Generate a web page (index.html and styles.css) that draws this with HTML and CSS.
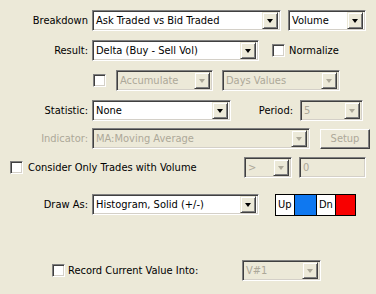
FILE: index.html
```html
<!DOCTYPE html>
<html>
<head>
<meta charset="utf-8">
<link rel="stylesheet" href="styles.css">
</head>
<body>
<div class="dlg">
  <div class="row r1">
    <span class="lbl">Breakdown</span>
    <div class="combo c-break"><span class="val">Ask Traded vs Bid Traded</span><span class="btn"><i class="arr"></i></span></div>
    <div class="combo c-vol"><span class="val">Volume</span><span class="btn"><i class="arr"></i></span></div>
  </div>
  <div class="row r2">
    <span class="lbl">Result:</span>
    <div class="combo c-result"><span class="val">Delta (Buy - Sell Vol)</span><span class="btn"><i class="arr"></i></span></div>
    <span class="chk chk-norm"></span><span class="ctext">Normalize</span>
  </div>
  <div class="row r3">
    <span class="chk chk-acc"></span>
    <div class="combo dis c-acc"><span class="val">Accumulate</span><span class="btn"><i class="arr"></i></span></div>
    <div class="combo dis c-days"><span class="val">Days Values</span><span class="btn"><i class="arr"></i></span></div>
  </div>
  <div class="row r4">
    <span class="lbl">Statistic:</span>
    <div class="combo c-stat"><span class="val">None</span><span class="btn"><i class="arr"></i></span></div>
    <span class="lbl-period">Period:</span>
    <div class="combo dis c-period"><span class="val">5</span><span class="btn"><i class="arr"></i></span></div>
  </div>
  <div class="row r5">
    <span class="lbl dis-text">Indicator:</span>
    <div class="combo dis c-ind"><span class="val">MA:Moving Average</span><span class="btn"><i class="arr"></i></span></div>
    <span class="button dis-text">Setup</span>
  </div>
  <div class="row r6">
    <span class="chk chk-cons"></span><span class="ctext">Consider Only Trades with Volume</span>
    <div class="combo dis c-op"><span class="val">&gt;</span><span class="btn"><i class="arr"></i></span></div>
    <div class="edit dis c-zero"><span class="val">0</span></div>
  </div>
  <div class="row r7">
    <span class="lbl">Draw As:</span>
    <div class="combo c-draw"><span class="val">Histogram, Solid (+/-)</span><span class="btn"><i class="arr"></i></span></div>
    <div class="colors">
      <span class="cell up">Up</span><span class="cell blue"></span><span class="cell dn">Dn</span><span class="cell red"></span>
    </div>
  </div>
  <div class="row r8">
    <span class="chk chk-rec"></span><span class="ctext">Record Current Value Into:</span>
    <div class="combo dis c-v"><span class="val">V#1</span><span class="btn"><i class="arr"></i></span></div>
  </div>
</div>
</body>
</html>
```

FILE: styles.css
```css
html, body {
  margin: 0;
  padding: 0;
  background: #ECE9D8;
}
body {
  width: 376px;
  height: 294px;
  overflow: hidden;
  font-family: Tahoma, "DejaVu Sans Condensed", "Liberation Sans", sans-serif;
  font-size: 11px;
  color: #000;
}
.dlg {
  display: flex;
  flex-direction: column;
  padding-top: 10px;
}
.row {
  display: flex;
  align-items: center;
  height: 21px;
}
.r2, .r3, .r4 { margin-top: 9px; }
.r5 { margin-top: 7px; }
.r6 { margin-top: 8px; }
.r7 { margin-top: 16px; }
.r8 { margin-top: 45px; }

.lbl {
  width: 88px;
  flex: none;
  text-align: right;
  white-space: nowrap;
}
.dis-text { color: #ACA899; }

.combo, .edit {
  box-sizing: border-box;
  height: 21px;
  flex: none;
  display: flex;
  align-items: center;
  background: #fff;
  border: 1px solid;
  border-color: #808080 #fff #fff #808080;
  box-shadow: inset 1px 1px 0 #404040, inset -1px -1px 0 #D4D0C8;
  padding: 2px;
  white-space: nowrap;
  overflow: hidden;
}
.combo .val, .edit .val {
  flex: 1;
  padding-left: 1px;
  overflow: hidden;
}
.combo.dis, .edit.dis {
  background: #ECE9D8;
  color: #ACA899;
}
.btn {
  box-sizing: border-box;
  width: 16px;
  height: 17px;
  flex: none;
  background: #ECE9D8;
  border: 1px solid;
  border-color: #ECE9D8 #404040 #404040 #ECE9D8;
  box-shadow: inset 1px 1px 0 #fff, inset -1px -1px 0 #808080;
  display: flex;
  align-items: center;
  justify-content: center;
}
.arr {
  width: 0;
  height: 0;
  border-left: 3.5px solid transparent;
  border-right: 3.5px solid transparent;
  border-top: 4px solid #000;
  margin-top: 1px;
}
.dis .arr { border-top-color: #ACA899; }

.chk {
  box-sizing: border-box;
  width: 13px;
  height: 13px;
  flex: none;
  background: #fff;
  border: 1px solid;
  border-color: #808080 #fff #fff #808080;
  box-shadow: inset 1px 1px 0 #404040, inset -1px -1px 0 #D4D0C8;
}
.ctext { white-space: nowrap; flex: none; }

.c-break { margin-left: 4px; width: 189px; }
.c-vol { margin-left: 7px; width: 78px; }

.c-result { margin-left: 4px; width: 167px; }
.chk-norm { margin-left: 13px; }
.chk-norm + .ctext { margin-left: 4px; }

.chk-acc { margin-left: 93px; }
.c-acc { margin-left: 10px; width: 97px; }
.c-days { margin-left: 9px; width: 118px; }

.c-stat { margin-left: 4px; width: 139px; }
.lbl-period { width: 62px; flex: none; text-align: right; }
.c-period { margin-left: 7px; width: 63px; }

.c-ind { margin-left: 4px; width: 218px; }
.button {
  box-sizing: border-box;
  flex: none;
  margin-left: 10px;
  width: 50px;
  height: 20px;
  display: flex;
  align-items: center;
  justify-content: center;
  background: #ECE9D8;
  border: 1px solid;
  border-color: #fff #404040 #404040 #fff;
  box-shadow: inset -1px -1px 0 #808080;
}

.chk-cons { margin-left: 10px; }
.chk-cons + .ctext { margin-left: 5px; width: 216px; }
.c-op { width: 48px; }
.c-zero { margin-left: 7px; width: 67px; }

.c-draw { margin-left: 4px; width: 167px; }
.colors {
  margin-left: 16px;
  display: flex;
  flex: none;
  height: 22px;
  border: 1px solid #000;
  box-sizing: border-box;
}
.cell {
  box-sizing: border-box;
  height: 100%;
  display: flex;
  align-items: center;
  padding-left: 2px;
}
.up { width: 19px; background: #fff; border-right: 1px solid #000; }
.blue { width: 21px; background: #0F78F0; }
.dn { width: 20px; background: #fff; border-left: 1px solid #000; border-right: 1px solid #000; }
.red { width: 19px; background: #F80000; }

.chk-rec { margin-left: 52px; }
.chk-rec + .ctext { margin-left: 3px; width: 174px; }
.c-v { width: 79px; }
```
